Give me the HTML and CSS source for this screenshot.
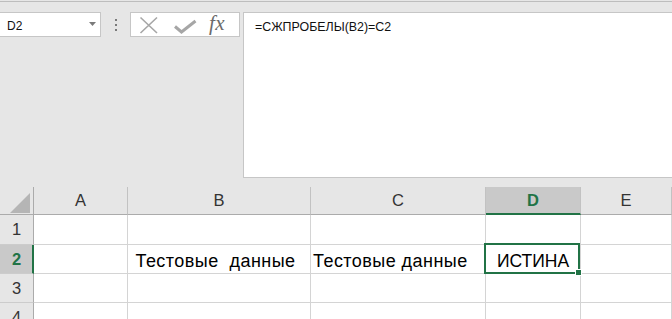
FILE: index.html
```html
<!DOCTYPE html>
<html lang="ru">
<head>
<meta charset="utf-8">
<title>СЖПРОБЕЛЫ</title>
<link rel="stylesheet" href="styles.css">
</head>
<body>
<div class="app">
  <div class="toolbar">
    <div class="namebox">
      <span class="ref">D2</span>
      <svg class="caret" width="7" height="4" viewBox="0 0 7 4"><polygon points="0,0 7,0 3.5,4" fill="#7a7a7a"/></svg>
    </div>
    <div class="dots"><i></i><i></i><i></i></div>
    <div class="fxbox">
      <svg class="fxicons" width="70" height="23" viewBox="0 0 70 23">
        <path d="M9.5 4.5 L26 20 M26 4.5 L9.5 20" stroke="#a6a6a6" stroke-width="1.6" fill="none"/>
        <path d="M44 13.5 L50.5 19 L64.5 8" stroke="#a6a6a6" stroke-width="3" fill="none"/>
      </svg>
      <span class="fx">fx</span>
    </div>
    <div class="formula">=СЖПРОБЕЛЫ(B2)=C2</div>
  </div>

  <div class="sheet">
    <div class="hd corner"><svg width="20" height="20" viewBox="0 0 20 20"><polygon points="20,0 20,20 0,20" fill="#b5b5b5"/></svg></div>
    <div class="hd col">A</div>
    <div class="hd col">B</div>
    <div class="hd col">C</div>
    <div class="hd col sel-col">D</div>
    <div class="hd col">E</div>

    <div class="rh">1</div>
    <div class="cell"></div>
    <div class="cell"></div>
    <div class="cell"></div>
    <div class="cell"></div>
    <div class="cell"></div>

    <div class="rh sel-row">2</div>
    <div class="cell"></div>
    <div class="cell text"> Тестовые  данные</div>
    <div class="cell text">Тестовые данные</div>
    <div class="cell center active">ИСТИНА<span class="handle"></span></div>
    <div class="cell"></div>

    <div class="rh">3</div>
    <div class="cell"></div>
    <div class="cell"></div>
    <div class="cell"></div>
    <div class="cell"></div>
    <div class="cell"></div>

    <div class="rh">4</div>
    <div class="cell"></div>
    <div class="cell"></div>
    <div class="cell"></div>
    <div class="cell"></div>
    <div class="cell"></div>
  </div>
</div>
</body>
</html>
```

FILE: styles.css
```css
html, body {
  margin: 0;
  padding: 0;
}
body {
  width: 672px;
  height: 319px;
  overflow: hidden;
  background: #e6e6e6;
  font-family: "Liberation Sans", Arial, sans-serif;
  color: #000;
}
.app {
  margin-top: 1px;
  border-top: 1px solid #bdbdbd;
}
.toolbar {
  display: flex;
  align-items: flex-start;
  padding-top: 10px;
}
.namebox {
  box-sizing: border-box;
  width: 102px;
  height: 25px;
  margin-left: -1px;
  background: #fff;
  border: 1px solid #c6c6c6;
  display: flex;
  align-items: center;
  padding: 2px 4px 0 7px;
  font-size: 12px;
}
.namebox .ref {
  flex: 1;
  color: #111;
}
.namebox .caret {
  margin-top: -3px;
}
.dots {
  margin-left: 14px;
  margin-top: 7px;
  display: flex;
  flex-direction: column;
  gap: 3px;
}
.dots i {
  display: block;
  width: 2px;
  height: 2px;
  background: #7a7a7a;
}
.fxbox {
  box-sizing: border-box;
  width: 110px;
  height: 25px;
  margin-left: 13px;
  background: #fff;
  border: 1px solid #c6c6c6;
  display: flex;
  align-items: flex-start;
}
.fxicons {
  display: block;
}
.fx {
  margin-left: 8px;
  font-family: "Liberation Serif", "Times New Roman", serif;
  font-style: italic;
  font-size: 21px;
  line-height: 21px;
  color: #6b6b6b;
  letter-spacing: 0.5px;
}
.formula {
  box-sizing: border-box;
  flex: 1;
  height: 166px;
  margin-left: 3px;
  margin-right: -1px;
  background: #fff;
  border: 1px solid #c6c6c6;
  padding: 6px 11px;
  font-size: 12.4px;
  line-height: 16px;
  color: #111;
}

.sheet {
  margin-top: 9px;
  display: grid;
  grid-template-columns: 34px 94px 183px 175px 95px 91px;
  grid-template-rows: 28px 30px 29px 29px 29px;
}
.sheet > div {
  box-sizing: border-box;
  border-right: 1px solid #d4d4d4;
  border-bottom: 1px solid #d4d4d4;
}
.hd {
  background: #e6e6e6;
  font-size: 16.5px;
  color: #333;
  display: flex;
  align-items: center;
  justify-content: center;
}
.sheet > .hd {
  border-bottom-color: #ababab;
  border-right-color: #c2c2c2;
}
.sheet > .corner {
  border-right-color: #ababab;
  justify-content: flex-end;
  align-items: flex-end;
  padding: 0 3px 1px 0;
}
.corner svg {
  display: block;
}
.sheet > .sel-col {
  background: #c9c9c9;
  color: #217346;
  font-weight: bold;
  border-bottom: 2px solid #217346;
  padding-top: 1px;
}
.sheet > .rh {
  background: #e6e6e6;
  border-right-color: #ababab;
  border-bottom-color: #cccccc;
  font-size: 16.5px;
  color: #333;
  display: flex;
  align-items: center;
  justify-content: center;
}
.sheet > .sel-row {
  background: #c9c9c9;
  color: #217346;
  font-weight: bold;
  border-right: 2px solid #217346;
  padding-left: 1px;
}
.cell {
  background: #fff;
  font-size: 17.5px;
  line-height: 20px;
  white-space: pre;
  display: flex;
  align-items: flex-end;
  padding: 0 2px 2px 2px;
  overflow: visible;
}
.cell.text {
  font-size: 18px;
  letter-spacing: 0.45px;
}
.cell.center {
  justify-content: center;
}
.active {
  position: relative;
}
.active::after {
  content: "";
  position: absolute;
  left: -2px;
  top: -2px;
  width: 96px;
  height: 31px;
  box-sizing: border-box;
  border: 2px solid #217346;
  pointer-events: none;
}
.handle {
  position: absolute;
  left: 89px;
  top: 24px;
  width: 7px;
  height: 7px;
  box-sizing: border-box;
  background: #217346;
  border: 1px solid #fff;
  z-index: 2;
}
```
